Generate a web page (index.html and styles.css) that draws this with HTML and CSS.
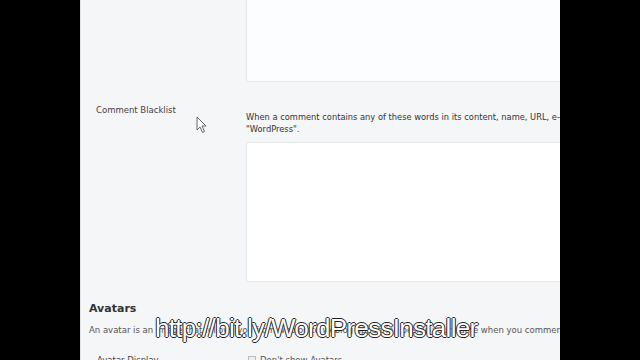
FILE: index.html
```html
<!DOCTYPE html>
<html lang="en">
<head>
  <meta charset="UTF-8">
  <title>Discussion Settings</title>
  <link rel="stylesheet" href="styles.css">
</head>
<body>
  <div class="frame">
    <div class="bar"></div>
    <div class="screen">
      <div class="page">
        <div class="row first">
          <div class="label"></div>
          <div class="field">
            <div class="box topbox"></div>
          </div>
        </div>
        <div class="row">
          <div class="label">Comment Blacklist</div>
          <div class="field">
            <p class="desc">When a comment contains any of these words in its content, name, URL, e-mail, or IP, it will be marked as spam. One word or IP per line. It will match inside words, so "press" will match<br>"WordPress".</p>
            <div class="box blbox"></div>
          </div>
        </div>
        <h3 class="section">Avatars</h3>
        <p class="intro">An avatar is an image that follows you from weblog to weblog appearing beside your name when you comment on avatar enabled sites.</p>
        <div class="row avrow">
          <div class="label">Avatar Display</div>
          <div class="field">
            <label class="choice"><span class="radio"></span>Don't show Avatars</label>
          </div>
        </div>
      </div>
      <svg class="cursor" width="12" height="18" viewBox="0 0 12 18">
        <path d="M1 1 L1 14 L4 11 L6.5 16.5 L8.5 15.5 L6 10 L10 10 Z" fill="#fff" stroke="#666" stroke-width="1"/>
      </svg>
      <div class="caption">http://bit.ly/WordPressInstaller</div>
    </div>
    <div class="bar"></div>
  </div>
</body>
</html>
```

FILE: styles.css
```css
html, body {
  margin: 0;
  background: #000;
}
.frame {
  display: flex;
  width: 640px;
  height: 360px;
}
.bar {
  width: 80px;
  flex: none;
  background: #000;
}
.screen {
  position: relative;
  width: 480px;
  height: 360px;
  overflow: hidden;
  background: #f5f6f8;
  border-left: 1px solid #e2e3e5;
  box-sizing: border-box;
  font-family: "DejaVu Sans", Verdana, sans-serif;
  color: #333;
}
.page {
  width: 560px;
  padding-left: 8px;
}
.row {
  display: flex;
}
.label {
  width: 150px;
  flex: none;
  padding-left: 7px;
  font-size: 8.5px;
  color: #444;
}
.field {
  flex: none;
  width: 400px;
}
.first {
  margin-top: -20px;
  padding-bottom: 23px;
}
.box {
  background: #fff;
  border: 1px solid #e6e7e9;
  border-radius: 2px;
}
.topbox {
  height: 100px;
  background: #fcfdfe;
}
.desc {
  margin: 6px 0 7px 0;
  font-size: 8.3px;
  line-height: 12px;
  white-space: nowrap;
  color: #333;
}
.blbox {
  height: 138px;
}
.section {
  margin: 20px 0 0 0;
  font-size: 11px;
  color: #333;
}
.intro {
  margin: 10px 0 0 0;
  font-size: 8.5px;
  color: #555;
  white-space: nowrap;
}
.avrow {
  margin-top: 20px;
}
.avrow .label {
  padding-left: 8px;
}
.choice {
  display: flex;
  align-items: center;
  gap: 4px;
  font-size: 8.5px;
  color: #555;
  margin-left: 1px;
}
.radio {
  width: 6px;
  height: 6px;
  border: 1px solid #bbb;
  background: #eee;
}
.cursor {
  position: absolute;
  left: 115px;
  top: 116px;
}
.caption {
  position: absolute;
  left: 74px;
  top: 313px;
  font-family: "Liberation Sans", Arial, sans-serif;
  font-size: 26px;
  letter-spacing: -0.7px;
  color: #fff;
  text-shadow: 1px 0 0 #222, -1px 0 0 #222, 0 1px 0 #222, 0 -1px 0 #222;
  white-space: nowrap;
}
```
